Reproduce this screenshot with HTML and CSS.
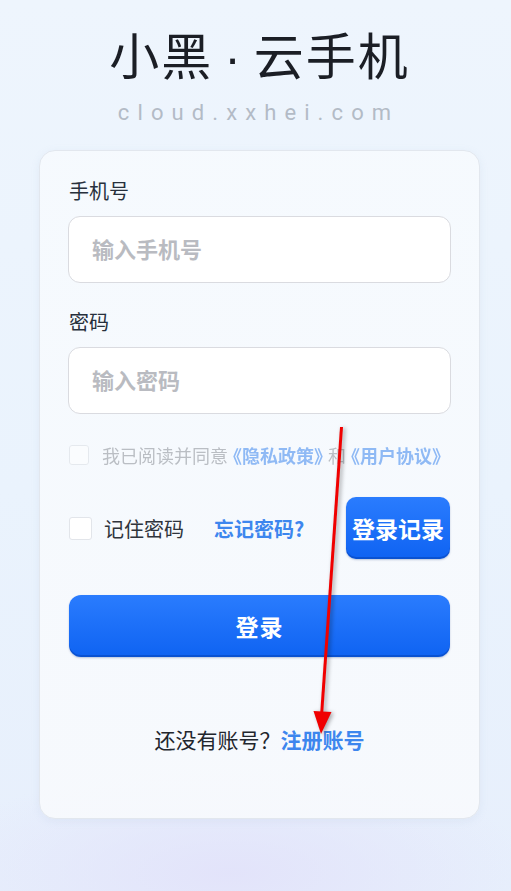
FILE: index.html
```html
<!DOCTYPE html>
<html lang="zh-CN">

<head>
  <meta charset="UTF-8" />
  <meta name="viewport" content="width=device-width, initial-scale=1" />
  <title>小黑 · 云手机 - 登录</title>
  <link rel="stylesheet" href="styles.css">
</head>

<body>

  <div class="page">
    <header class="brand">
      <h1 class="brand-title">小黑<span class="brand-dot">·</span>云手机</h1>
      <div class="brand-domain">cloud.xxhei.com</div>
    </header>

    <main class="card">
      <label class="field-label" for="phoneInput">手机号</label>
      <input class="field-input" type="text" id="phoneInput" placeholder="输入手机号" />

      <label class="field-label second" for="pwdInput">密码</label>
      <input class="field-input" type="password" id="pwdInput" placeholder="输入密码" />

      <div class="agree-row">
        <span class="check"></span>
        <span class="agree-text">我已阅读并同意<a class="agree-link" href="#">《隐私政策》</a>和<a class="agree-link" href="#">《用户协议》</a></span>
      </div>

      <div class="remember-row">
        <span class="check big"></span>
        <span class="remember-text">记住密码</span>
        <a class="forgot-link" href="#">忘记密码?</a>
        <button class="btn history-btn">登录记录</button>
      </div>

      <button class="btn login-btn">登录</button>

      <p class="register">还没有账号？<a class="register-link" href="#">注册账号</a></p>
    </main>
  </div>

  <!-- 标注箭头 -->
  <svg class="annotation" width="511" height="891" viewBox="0 0 511 891">
    <line x1="341.5" y1="427" x2="321.5" y2="716" stroke="#f00000" stroke-width="3" />
    <polygon points="313.5,711 331.5,712 321,734" fill="#f00000" />
  </svg>

</body>

</html>
```

FILE: styles.css
```css
body {
  margin: 0;
  min-height: 891px;
  font-family: "Noto Sans CJK SC", "Noto Sans", sans-serif;
  background:
    radial-gradient(ellipse 60% 12% at 45% 98%, rgba(226, 226, 250, 0.9), rgba(226, 226, 250, 0)),
    linear-gradient(180deg, #eef5fd 0%, #eaf3fd 55%, #e7effc 100%);
  color: #1c1f26;
}

.page {
  margin: 0 31px 0 39px;
  padding-top: 20px;
}

.brand {
  text-align: center;
}

.brand-title {
  margin: 0;
  font-size: 50px;
  font-weight: 400;
  line-height: 66px;
  letter-spacing: 2px;
  color: #1b1e25;
}

.brand-dot {
  font-family: "Liberation Sans", sans-serif;
  margin: 0 11px;
}

.brand-domain {
  margin-top: 8px;
  font-family: Roboto, "Liberation Sans", sans-serif;
  font-size: 22px;
  line-height: 28px;
  letter-spacing: 8.1px;
  padding-right: 2px;
  color: #b3bbc6;
}

.card {
  margin-top: 23px;
  height: 669px;
  box-sizing: border-box;
  padding: 26px 29px 0;
  background: linear-gradient(180deg, rgba(246, 250, 254, 0.95), rgba(248, 250, 253, 0.9));
  border: 1px solid #e2e7ee;
  border-radius: 16px;
  box-shadow: 0 2px 8px rgba(150, 170, 200, 0.12);
}

.field-label {
  display: block;
  font-size: 20px;
  line-height: 28px;
  color: #27303c;
}

.field-label.second {
  margin-top: 25px;
}

.field-input {
  display: block;
  width: calc(100% + 2px);
  height: 67px;
  margin: 11px -1px 0;
  box-sizing: border-box;
  padding: 0 23px 4px;
  background: #fff;
  border: 1px solid #dadbe0;
  border-radius: 12px;
  font-family: inherit;
  font-size: 22px;
  font-weight: 700;
  outline: none;
}

.field-input::placeholder {
  color: #b9bbc1;
}

.agree-row {
  display: flex;
  align-items: center;
  margin-top: 30px;
  opacity: 0.55;
}

.check {
  flex: none;
  width: 20px;
  height: 20px;
  box-sizing: border-box;
  background: #fff;
  border: 1px solid #d8dce2;
  border-radius: 3px;
}

.check.big {
  width: 23px;
  height: 23px;
  border-color: #e2e5ea;
}

.agree-text {
  margin-left: 13px;
  font-size: 18px;
  line-height: 22px;
  white-space: nowrap;
  color: #8a8e95;
}

.agree-link {
  margin: 0 5px;
  color: #3c86ee;
  font-weight: 700;
  text-decoration: none;
  font-feature-settings: "halt";
}

.remember-row {
  display: flex;
  align-items: center;
  margin-top: 31px;
}

.remember-text {
  margin-left: 12px;
  font-size: 20px;
  color: #2f343c;
}

.forgot-link {
  margin-left: 30px;
  font-size: 20px;
  font-weight: 700;
  color: #3d86ee;
  text-decoration: none;
}

.btn {
  border: none;
  cursor: pointer;
  color: #fff;
  font-family: inherit;
  font-weight: 700;
  background: linear-gradient(180deg, #2a7cfe 0%, #0f63f2 100%);
  box-shadow: inset 0 -2px 0 rgba(0, 50, 150, 0.35), 0 1px 2px rgba(0, 40, 120, 0.25);
}

.history-btn {
  margin-left: auto;
  width: 104px;
  height: 62px;
  padding: 0;
  border-radius: 10px;
  font-size: 23px;
}

.login-btn {
  display: block;
  width: 100%;
  height: 62px;
  margin: 36px 0 0;
  border-radius: 12px;
  font-size: 23px;
  letter-spacing: 1px;
}

.register {
  margin: 68px 0 0;
  text-align: center;
  font-size: 21px;
  line-height: 28px;
  color: #22262d;
}

.register-link {
  color: #3d86ee;
  font-weight: 700;
  text-decoration: none;
}

.annotation {
  position: absolute;
  left: 0;
  top: 0;
  pointer-events: none;
  filter: drop-shadow(2px 1px 2px rgba(0, 0, 0, 0.35));
}
```
